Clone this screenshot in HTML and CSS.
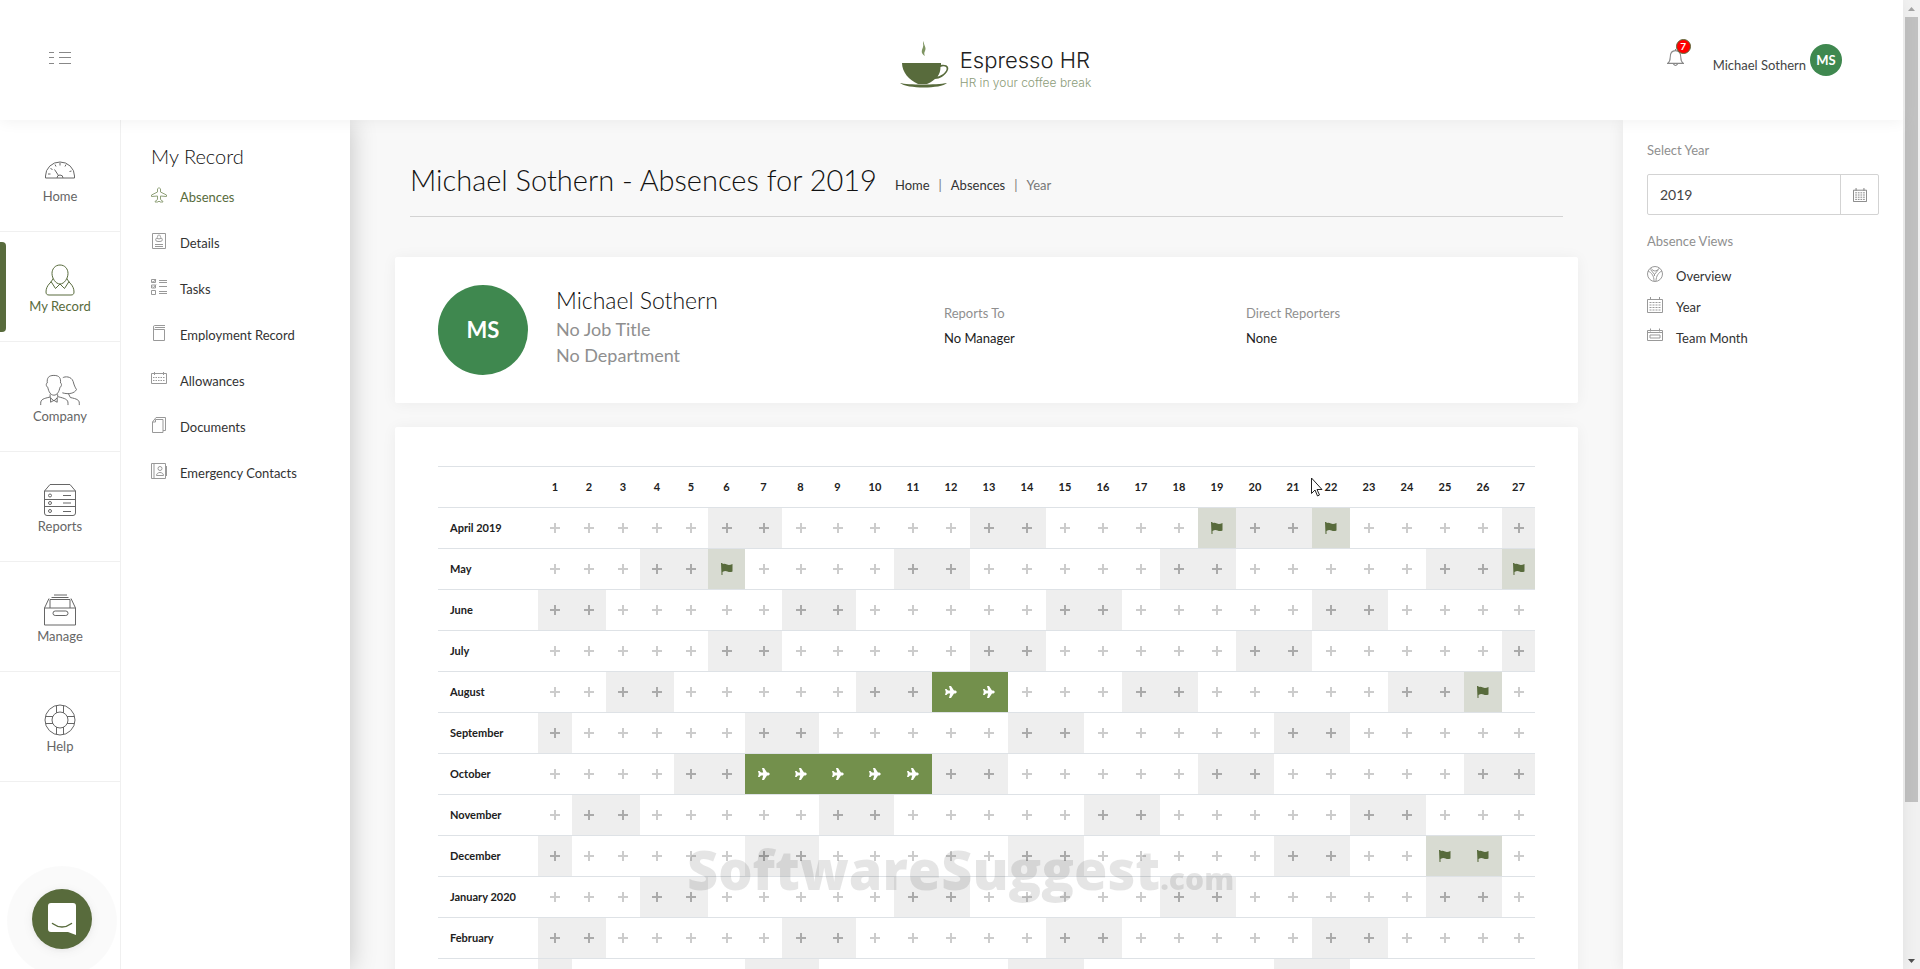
FILE: index.html
```html
<!DOCTYPE html>
<html lang="en">
  <head>
    <meta charset="utf-8">
    <meta name="viewport" content="width=device-width, initial-scale=1">
    <title>Espresso HR - Absences</title>

    <link rel="stylesheet" href="styles.css">
  </head>
  <body>
    <svg class="symbols" aria-hidden="true">
      <symbol id="i-gauge" viewBox="0 0 32 32">
        <path d="M1.5 24v-2a14.5 14 0 0 1 29 0v2z" />
        <path d="M13 24a3 3 0 0 1 6 0M14.5 21.500L10.500 15.500M4 20h2.500M6.500 14.500l2 1M11 10.500l1 2M16 9v2.500M22 10.500l-1 2M25.500 17.500l2-.500" />
      </symbol>
      <symbol id="i-user" viewBox="0 0 32 32">
        <path d="M16 1c5 0 8 4 8 8.500S20.500 20 16 20s-8-6-8-10.500S11 1 16 1z" />
        <path d="M9 14.500c-1 2-1.500 3-3 4.500-3 3-4 6-4 9 0 2 1 3 3 3h22c2 0 3-1 3-3 0-3-1-6-4-9-1.500-1.500-2-2.500-3-4.500" />
        <path d="M7 17.500l4.500 7 4.500-4.500 4.500 4.500 4.500-7" />
      </symbol>
      <symbol id="i-users" viewBox="0 0 44 34">
        <path d="M15.500 1.500c-6 0-7.500 3-7 8-1.500 0-1.500 4 .5 4.500C10 19 12 22.500 15.500 22.500S21 19 22 14c2-.5 2-4.500.5-4.500.5-5-1-8-7-8z" />
        <path d="M1.500 33v-2c0-4 3-5 10-6.500v-3M19.500 21.500V24c8 2 11 3 11 7v2M11.500 25l4 3.500 4-3.500M12 25v5l3.500-2 3.500 2v-5" />
        <path d="M25 4c2-1.500 9-2 11 4 1 4 2 6 3.500 8.500-2 4-8 5.500-15 3.500M31 21l2 4c7 1.500 9.500 2.500 9.500 6v2" />
      </symbol>
      <symbol id="i-server" viewBox="0 0 32 32">
        <path d="M.5 7L6 .5h20L31.500 7v22q0 2.500-2.500 2.500H3Q.5 31.500.5 29zM.5 7h31M.5 15.500h31M.5 22.500h31M19 11.500h8M19 19h8M19 27.500h8" />
        <circle cx="6" cy="11.500" r="1.500" /><circle cx="6" cy="19" r="1.500" /><circle cx="6" cy="27" r="1.500" />
      </symbol>
      <symbol id="i-box" viewBox="0 0 32 32">
        <path d="M.5 14h31v17H.5zM.5 14L5 4.500M31.500 14L27 4.500M6 14V5.500h20V14M7.500 3.500h17M10 1h13" />
        <rect x="9" y="17" width="15" height="4.500" rx="2.200" />
      </symbol>
      <symbol id="i-ring" viewBox="0 0 32 32">
        <circle cx="16" cy="16" r="15" /><circle cx="16" cy="16" r="8" />
        <path d="M12.500 1.500V9M19.500 1.500V9M12.500 23v7.500M19.500 23v7.500M1.500 12.500H9M1.500 19.500H9M23 12.500h7.500M23 19.500h7.500" />
      </symbol>
      <symbol id="i-plane" viewBox="0 0 16 16">
        <path d="M6.500 5V2Q8-1 9.500 2v3l6 3v1.500l-6-.5v3.500l2.500 2v.5H9l-1-1-1 1H4v-.5l2.500-2V9l-6 .5V8z" />
      </symbol>
      <symbol id="i-badge" viewBox="0 0 16 16">
        <path d="M1.500.5h13v15h-13zM4 11.500h8M4 13.500h8M6.500 4.500c0-3.500 3-3.500 3 0M5.500 5Q3 8.500 8 8.500T10.500 5L8 6z" />
      </symbol>
      <symbol id="i-tasks" viewBox="0 0 16 16">
        <path d="M.5.500h4v3h-4zM.5 6h4v3h-4zM.5 11.500h4v4h-4zM1.500 2l1 1L5 0M1.500 7.500l1 1 2.500-3M8 1.500h8M8 3.500h8M8 7.500h8M8 12.500h8M8 14.500h8" />
      </symbol>
      <symbol id="i-book" viewBox="0 0 16 16">
        <path d="M14 .5H3.500Q2.500.5 2.500 2v13.500h11V4.500h-10Q2.500 4 2.500 2M4 2.500h10" />
      </symbol>
      <symbol id="i-cal" viewBox="0 0 16 16">
        <path d="M.5 2.500h15v10H.5zM3.500 1v3M12.500 1v3" /><path stroke-dasharray="1.500 1" d="M2 6.500h12M2 9.500h12" />
      </symbol>
      <symbol id="i-docs" viewBox="0 0 16 16">
        <path d="M5 .5h9.500v13H12M5 .5L1.500 5v10.500H12V2.500H4.500V5h-3" />
      </symbol>
      <symbol id="i-contact" viewBox="0 0 16 16">
        <path d="M.5.500h14v15H.5zM3 .5v15M15.500 3v10M5.500 12.500c0-4 7-4 7 0z" /><circle cx="9" cy="5.500" r="2" />
      </symbol>
      <symbol id="i-globe" viewBox="0 0 16 16">
        <circle cx="8" cy="8" r="7.500" />
        <path d="M3.500 2C5 4 7 5 8 5s3-1 4.500-3M1 5c4 2 6 5 6 10M3.500 3.500l4 5 4-5M15 5c-3 1-6 5-6 10M7.500 8v2" />
      </symbol>
      <symbol id="i-month" viewBox="0 0 16 16">
        <path d="M.5 2.500h15v13H.5zM3.500 0v3M12.500 0v3" /><path stroke-dasharray="2 1" d="M2.500 5.500h11M2.500 8h11M2.500 10.500h11M2.500 13h11" />
      </symbol>
      <symbol id="i-team" viewBox="0 0 16 16">
        <path d="M.5 2.500h15v10H.5zM3.500 .5v3M12.500 .5v3M.5 4.500h15M3 7h10v3H3z" />
      </symbol>
      <symbol id="i-bell" viewBox="0 0 16 16">
        <path d="M.5 13.500Q3 12 3 8c0-4 2-6.500 5-6.500S13 4 13 8q0 4 2.500 5.500zM6 14q2 3 4 0M8 0v1.500" />
      </symbol>
      <symbol id="c-plus" viewBox="0 0 10 10"><path d="M4 0h2v4h4v2H6v4H4V6H0V4h4z" /></symbol>
      <symbol id="c-flag" viewBox="0 0 12 12"><path d="M0 0h1.500v1Q4 .3 6 1.500T11.500 1v7.500Q9 9.500 6.500 8.500t-5 .5v3H.5z" /></symbol>
      <symbol id="c-plane" viewBox="0 0 12 12"><path d="M4 0h2l3 4.500h1.500q2.500 1.500 0 3H9l-3 4.500H4l1.200-4.500H3L1.500 9H0l.8-3L0 3h1.500L3 4.500h2.200z" /></symbol>
    </svg>

    <div class="app">
      <header class="topbar">
        <div class="topbar-left">
          <button type="button" class="icon-button" aria-label="Toggle menu">
            <svg width="22" height="14" viewBox="0 0 22 14"><path d="M0 1.500h5M10 1.500h12M0 6.500h5M10 6.500h12M0 12.500h5M10 12.500h12" /></svg>
          </button>
        </div>
        <a class="logo" href="#">
          <svg width="50" height="48" viewBox="0 0 50 48">
            <path fill="#586b3c" d="M2 22h39v2c7-1 9 3 6 7s-7 7-12 7c-3 2.500-6 4.500-8 5h-9C9 39 2 31 2 22zm38.500 4c0 4-1 7-3 9.500 4-.5 8-4 9-7s-3-4-6-2.500zM0 42c8 2 36 2 47 0-6 6-40 6-47 0z" />
            <path fill="#7f9563" d="M24 0c-1 4 3 6 1 10-1 2-1 3 0 5-5-3-3-6-2-9s-1-3 1-6z" />
          </svg>
          <span class="logo-text">
            <span class="logo-name">Espresso HR</span>
            <span class="logo-tag">HR in your coffee break</span>
          </span>
        </a>
        <div class="topbar-right">
          <button type="button" class="icon-button bell" aria-label="Notifications">
            <svg width="17" height="17"><use href="#i-bell" /></svg>
            <span class="bell-count">7</span>
          </button>
          <button type="button" class="account">
            <span>Michael Sothern</span>
            <span class="avatar avatar-small">MS</span>
          </button>
        </div>
      </header>

      <div class="body">
        <nav class="rail">
          <a href="#"><svg><use href="#i-gauge" /></svg>Home</a>
          <a href="#" class="active"><svg><use href="#i-user" /></svg>My Record</a>
          <a href="#"><svg class="wide"><use href="#i-users" /></svg>Company</a>
          <a href="#"><svg><use href="#i-server" /></svg>Reports</a>
          <a href="#"><svg><use href="#i-box" /></svg>Manage</a>
          <a href="#"><svg><use href="#i-ring" /></svg>Help</a>
        </nav>

        <nav class="submenu">
          <h2>My Record</h2>
          <a href="#" class="active"><svg><use href="#i-plane" /></svg>Absences</a>
          <a href="#"><svg><use href="#i-badge" /></svg>Details</a>
          <a href="#"><svg><use href="#i-tasks" /></svg>Tasks</a>
          <a href="#"><svg><use href="#i-book" /></svg>Employment Record</a>
          <a href="#"><svg><use href="#i-cal" /></svg>Allowances</a>
          <a href="#"><svg><use href="#i-docs" /></svg>Documents</a>
          <a href="#"><svg><use href="#i-contact" /></svg>Emergency Contacts</a>
        </nav>

        <main class="content">
          <div class="page-title">
            <h1>Michael Sothern - Absences for 2019</h1>
            <ol class="breadcrumb">
              <li><a href="#">Home</a></li>
              <li><a href="#">Absences</a></li>
              <li>Year</li>
            </ol>
          </div>

          <section class="card profile">
            <span class="avatar avatar-large">MS</span>
            <div class="profile-name">
              <h3>Michael Sothern</h3>
              <p>No Job Title</p>
              <p>No Department</p>
            </div>
            <dl>
              <dt>Reports To</dt>
              <dd>No Manager</dd>
            </dl>
            <dl>
              <dt>Direct Reporters</dt>
              <dd>None</dd>
            </dl>
          </section>

          <section class="card calendar">
            <table class="year">
              <colgroup>
                <col class="col-month">
                <col class="col-s" span="5">
                <col class="col-m" span="4">
                <col class="col-l" span="17">
                <col>
              </colgroup>
              <thead><tr id="days"><th></th></tr></thead>
              <tbody id="months"></tbody>
            </table>
          </section>
        </main>

        <aside class="options">
          <label for="year">Select Year</label>
          <div class="input-group">
            <input id="year" type="text" value="2019">
            <button type="button" aria-label="Pick a year"><svg width="14" height="14"><use href="#i-month" /></svg></button>
          </div>
          <p class="options-title">Absence Views</p>
          <a href="#"><svg><use href="#i-globe" /></svg>Overview</a>
          <a href="#"><svg><use href="#i-month" /></svg>Year</a>
          <a href="#"><svg><use href="#i-team" /></svg>Team Month</a>
        </aside>
      </div>
    </div>

    <div class="scrollbar">
      <svg width="17" height="17"><path fill="#a3a3a3" d="M5 11l3.500-4 3.500 4z" /></svg>
      <div class="thumb"></div>
      <svg width="17" height="17"><path fill="#505050" d="M5 7l3.500 4L12 7z" /></svg>
    </div>

    <button type="button" class="chat" aria-label="Open chat">
      <svg width="28" height="32" viewBox="0 0 28 32">
        <path fill="#fff" d="M3 0h22q3 0 3 3v29l-8-3H3q-3 0-3-3V3q0-3 3-3z" />
        <path fill="none" stroke="#586b3c" stroke-width="1.500" stroke-linecap="round" d="M4.500 20.500q9.500 7 19 0" />
      </svg>
    </button>

    <div class="watermark">SoftwareSuggest<small>.com</small></div>
    <svg class="pointer" width="12" height="20" viewBox="0 0 12 20"><path fill="#fff" stroke="#222" d="M.5 1v15.500l3.500-3.500 2.500 6 2-1-2.500-5.500h5z" /></svg>

    <script src="calendar.js"></script>
  </body>
</html>
```
FILE: styles.css
```css
* {
  box-sizing: border-box;
}

body {
  display: flex;
  height: 100vh;
  margin: 0;
  overflow: hidden;
  background: #f8f8f8;
  color: #212121;
  font-family: Lato, "Open Sans", sans-serif;
  font-size: 13px;
  line-height: 20px;
}

h1, h2, h3, p, dl, dd, ol {
  margin: 0;
  padding: 0;
  font-weight: 400;
}

h1, h2, h3 {
  color: #111;
  font-weight: 300;
}

a {
  color: inherit;
  text-decoration: none;
}

button {
  padding: 0;
  border: 0;
  background: none;
  color: inherit;
  font: inherit;
}

svg {
  display: block;
  flex: none;
}

.symbols {
  position: absolute;
  width: 0;
  height: 0;
}

.app {
  display: flex;
  flex: 1;
  flex-direction: column;
  min-width: 0;
}

/* Top bar */

.topbar {
  z-index: 3;
  display: grid;
  grid-template-columns: 1fr auto 1fr;
  flex: none;
  align-items: center;
  height: 120px;
  padding: 0 61px 0 49px;
  background: #fff;
  box-shadow: 0 1px 15px rgba(0, 0, 0, 0.06);
}

.icon-button svg {
  fill: none;
  stroke: #888;
}

.logo {
  display: flex;
  gap: 10px;
  padding: 13px 0 0 100px;
}

.logo-text {
  display: flex;
  flex-direction: column;
  padding-top: 5px;
  font-family: Inter, sans-serif;
  font-weight: 300;
}

.logo-name {
  font-size: 22px;
  line-height: 28px;
}

.logo-tag {
  color: #8c9c78;
  font-size: 12px;
  line-height: 18px;
}

.topbar-right {
  display: flex;
  justify-content: flex-end;
  gap: 29px;
}

.bell {
  position: relative;
  margin-bottom: 6px;
}

.bell-count {
  position: absolute;
  top: -5px;
  right: -7px;
  width: 15px;
  height: 15px;
  border: 1px solid #586b3c;
  border-radius: 50%;
  background: #f00;
  color: #fff;
  font-size: 10px;
  font-weight: 700;
  line-height: 13px;
  text-align: center;
}

.account {
  display: flex;
  align-items: center;
  gap: 4px;
  color: #444;
}

.account > span:first-child {
  padding-top: 10px;
}

.avatar {
  display: flex;
  flex: none;
  align-items: center;
  justify-content: center;
  border-radius: 50%;
  background: #3f884f;
  color: #fff;
  font-weight: 700;
}

.avatar-small {
  width: 32px;
  height: 32px;
}

.avatar-large {
  width: 90px;
  height: 90px;
  font-size: 22px;
}

/* Side navigation */

.body {
  display: flex;
  flex: 1;
  min-height: 0;
}

.rail {
  z-index: 2;
  flex: none;
  width: 121px;
  padding-top: 2px;
  border-right: 1px solid #f0f0f0;
  background: #fff;
}

.rail a {
  display: flex;
  flex-direction: column;
  align-items: center;
  height: 110px;
  padding-top: 32px;
  border-bottom: 1px solid #f0f0f0;
  color: #666;
}

.rail svg {
  width: 32px;
  height: 32px;
  fill: none;
  stroke: #666;
}

.rail svg.wide {
  width: 44px;
}

.rail a.active {
  color: #586b3c;
}

.rail .active::before {
  content: "";
  align-self: flex-start;
  width: 6px;
  height: 90px;
  margin: -22px 0 -68px;
  border-radius: 0 4px 4px 0;
  background: #586b3c;
}

.rail .active svg {
  stroke: #586b3c;
}

.submenu {
  z-index: 1;
  flex: none;
  width: 229px;
  padding: 23px 30px;
  background: #fff;
  box-shadow: 0 1px 25px rgba(0, 0, 0, 0.22);
}

.submenu h2 {
  font-size: 20px;
  line-height: 27px;
}

.submenu a {
  display: flex;
  gap: 13px;
  height: 46px;
  padding-top: 17px;
  color: #333;
}

.submenu a.active {
  color: #586b3c;
}

.submenu svg,
.options svg {
  width: 16px;
  height: 16px;
  fill: none;
  stroke: #999;
}

.submenu .active svg {
  stroke: #8fa078;
}

/* Content */

.content {
  flex: 1;
  min-width: 0;
  padding: 0 45px;
  overflow: hidden;
}

.page-title {
  display: flex;
  align-items: center;
  gap: 18px;
  height: 97px;
  margin: 0 15px 40px;
  padding-top: 24px;
  border-bottom: 1px solid #d3d3d3;
}

.page-title h1 {
  font-size: 29px;
  line-height: 36px;
}

.breadcrumb {
  display: flex;
  padding-top: 10px;
  color: #333;
  list-style: none;
}

.breadcrumb li:last-child {
  color: #777;
}

.breadcrumb li + li::before {
  content: "|";
  padding: 0 9px;
  color: #777;
}

.card {
  border-radius: 2px;
  background: #fff;
  box-shadow: 0 1px 15px rgba(0, 0, 0, 0.05);
}

.profile {
  display: grid;
  grid-template-columns: 90px 360px 274px 1fr;
  gap: 28px;
  align-items: center;
  height: 146px;
  margin-bottom: 24px;
  padding: 0 43px;
}

.profile-name {
  padding-bottom: 8px;
  color: #8f8f8f;
  font-size: 18px;
  line-height: 26px;
}

.profile-name h3 {
  color: #111;
  font-size: 23px;
  line-height: 32px;
}

.profile dl {
  padding-bottom: 8px;
  line-height: 25px;
}

dt {
  color: #8f8f8f;
}

.calendar {
  padding: 39px 43px;
}

.year {
  width: 100%;
  border-collapse: collapse;
  table-layout: fixed;
  font-size: 11px;
  font-weight: 700;
}

.col-month {
  width: 100px;
}

.col-s {
  width: 34px;
}

.col-m {
  width: 37px;
}

.col-l {
  width: 38px;
}

.year th,
.year td {
  height: 41px;
  padding: 0;
  border-top: 1px solid #dee2e6;
  text-align: center;
}

.year tbody th {
  padding-left: 12px;
  text-align: left;
}

.year button {
  display: block;
  margin: 0 auto;
}

.year svg {
  width: 10px;
  height: 10px;
  fill: #ccc;
}

.year .weekend {
  background: #eee;
}

.year .weekend svg {
  fill: #aaa;
}

.year .holiday {
  background: #d8dbd2;
}

.year .leave {
  background: #73904c;
}

.year .holiday svg,
.year .leave svg {
  width: 12px;
  height: 12px;
  fill: #586b3c;
}

.year .leave svg {
  fill: #fff;
}

/* Options panel */

.options {
  z-index: 1;
  flex: none;
  width: 280px;
  padding: 20px 24px;
  background: #fff;
  box-shadow: 0 1px 15px rgba(0, 0, 0, 0.08);
}

.options label,
.options-title {
  display: block;
  color: #8f8f8f;
}

.input-group {
  display: flex;
  height: 41px;
  margin: 14px 0 16px;
  border: 1px solid #d3d3d3;
  border-radius: 2px;
}

.input-group input {
  flex: 1;
  min-width: 0;
  padding: 0 12px;
  border: 0;
  background: none;
  color: #444;
  font: inherit;
  font-size: 14px;
}

.input-group button {
  display: flex;
  align-items: center;
  justify-content: center;
  width: 38px;
  border-left: 1px solid #d3d3d3;
}

.input-group svg {
  width: 14px;
  height: 14px;
  stroke: #777;
}

.options a {
  display: flex;
  gap: 13px;
  height: 31px;
  padding-top: 15px;
  color: #333;
}

/* Floating pieces */

.scrollbar {
  display: flex;
  flex: none;
  flex-direction: column;
  width: 17px;
  background: #f1f1f1;
}

.thumb {
  width: 13px;
  height: 81%;
  margin: 0 2px auto;
  background: #c1c1c1;
}

.chat {
  position: fixed;
  bottom: 20px;
  left: 32px;
  z-index: 4;
  display: flex;
  align-items: center;
  justify-content: center;
  width: 60px;
  height: 60px;
  border-radius: 50%;
  background: #586b3c;
  box-shadow: 0 1px 6px rgba(0, 0, 0, 0.06), 0 2px 16px rgba(0, 0, 0, 0.06), 0 2px 0 25px rgba(0, 0, 0, 0.02);
}

.watermark {
  position: fixed;
  bottom: 55px;
  left: 687px;
  z-index: 4;
  color: rgba(0, 0, 0, 0.1);
  font-family: "Open Sans", sans-serif;
  font-size: 54px;
  font-weight: 800;
  line-height: 70px;
  pointer-events: none;
}

.watermark small {
  font-size: 30px;
}

.pointer {
  position: fixed;
  top: 477px;
  left: 1311px;
  z-index: 4;
}
```
FILE: calendar.js
```js
const DAYS = 27
const START = { year: 2019, month: 3 }
const ROWS = 12

// Keys are "year-month", with months counted from 1
const holidays = {
  "2019-4": [19, 22],
  "2019-5": [6, 27],
  "2019-8": [26],
  "2019-12": [25, 26],
}

const leave = {
  "2019-8": [12, 13],
  "2019-10": [7, 8, 9, 10, 11],
}

const days = document.querySelector("#days")
for (let day = 1; day <= DAYS; day++) {
  days.insertAdjacentHTML("beforeend", `<th>${day}</th>`)
}

const months = document.querySelector("#months")
for (let i = 0; i < ROWS; i++) {
  const first = new Date(START.year, START.month + i, 1)
  const year = first.getFullYear()
  const month = first.getMonth()
  const key = `${year}-${month + 1}`

  let label = first.toLocaleString("en", { month: "long" })
  if (i === 0 || month === 0) label += ` ${year}`

  let row = `<th>${label}</th>`
  for (let day = 1; day <= DAYS; day++) {
    const weekday = new Date(year, month, day).getDay()
    let type = ""
    let icon = "plus"

    if (holidays[key]?.includes(day)) {
      type = "holiday"
      icon = "flag"
    } else if (leave[key]?.includes(day)) {
      type = "leave"
      icon = "plane"
    } else if (weekday === 0 || weekday === 6) {
      type = "weekend"
    }

    row += `<td class="${type}"><button type="button" aria-label="${label} ${day}"><svg><use href="#c-${icon}" /></svg></button></td>`
  }

  months.insertAdjacentHTML("beforeend", `<tr>${row}</tr>`)
}
```
